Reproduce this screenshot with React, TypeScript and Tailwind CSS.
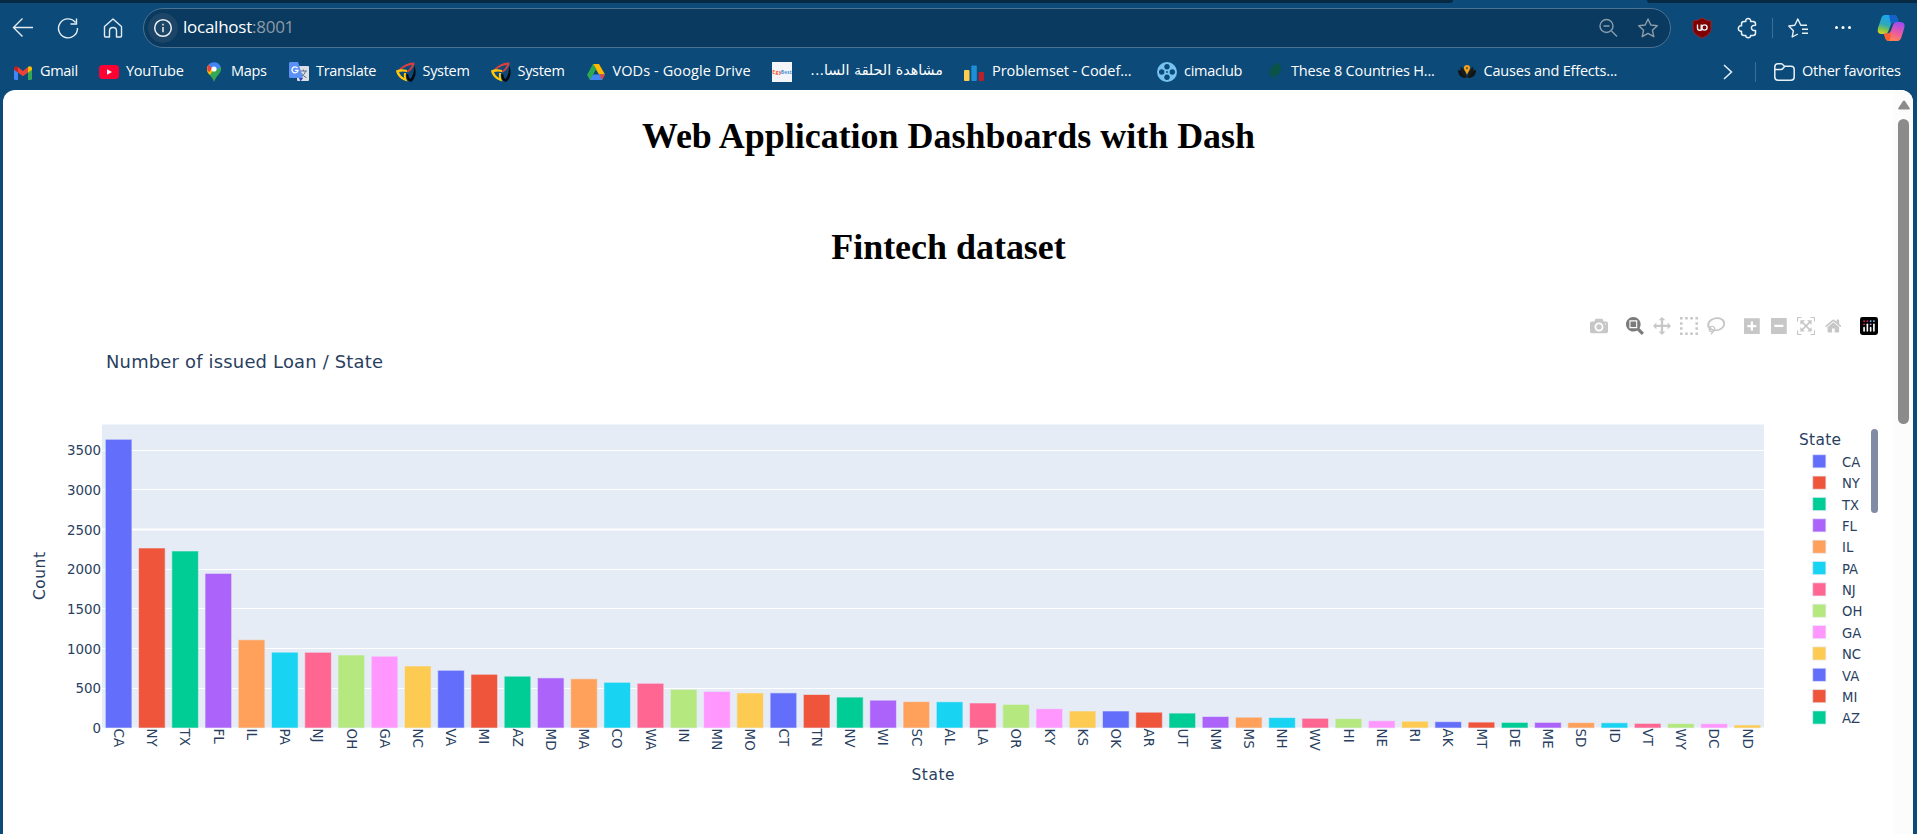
import type { ReactNode } from "react";

const PALETTE = ["#636efa", "#ef553b", "#00cc96", "#ab63fa", "#ffa15a", "#19d3f3", "#ff6692", "#b6e880", "#ff97ff", "#fecb52"];

// [state, bar top inside the plot's coordinate space]
const STATES: [string, number][] = [
  ["CA", 439.7], ["NY", 548.4], ["TX", 551.4], ["FL", 573.8], ["IL", 640.2], ["PA", 652.6], ["NJ", 652.7], ["OH", 655.4],
  ["GA", 656.6], ["NC", 666.4], ["VA", 670.7], ["MI", 674.7], ["AZ", 676.6], ["MD", 678.3], ["MA", 679.2], ["CO", 682.7],
  ["WA", 683.7], ["IN", 689.8], ["MN", 691.8], ["MO", 693.3], ["CT", 693.3], ["TN", 694.9], ["NV", 697.5], ["WI", 700.6],
  ["SC", 702], ["AL", 702.2], ["LA", 703.4], ["OR", 704.8], ["KY", 709.2], ["KS", 711.4], ["OK", 711.4], ["AR", 712.6],
  ["UT", 713.5], ["NM", 716.9], ["MS", 717.6], ["NH", 718], ["WV", 718.7], ["HI", 719], ["NE", 721.2], ["RI", 721.6],
  ["AK", 722.1], ["MT", 722.5], ["DE", 722.8], ["ME", 722.8], ["SD", 723], ["ID", 723.2], ["VT", 723.8], ["WY", 723.9],
  ["DC", 724.1], ["ND", 725.4],
];

const TICKS = [0, 500, 1000, 1500, 2000, 2500, 3000, 3500];
const ZERO = 728;
const LEFT = 102;
const STEP = 33.24;

function Chart() {
  return (
    <svg width="1891" height="480" viewBox="3 354 1891 480" className="block overflow-visible font-['DejaVu_Sans',sans-serif]" fill="#2a3f5f">
      <text x="106" y="368" fontSize="17.9" textLength="277">Number of issued Loan / State</text>
      <rect x="102" y="424.5" width="1662" height="303.5" fill="#e5ecf6" />
      {TICKS.map((t) => {
        const y = ZERO - t * 0.07935;
        const line = Math.round(y - 0.5) + 0.5;
        return (
          <g key={t}>
            <line x1="102" x2="1764" y1={line} y2={line} stroke="#fff" strokeWidth={t === 2500 || t === 0 ? 2 : 1} />
            <text x="101" y={y + 5} fontSize="13.4" textAnchor="end">{t}</text>
          </g>
        );
      })}
      {STATES.map(([name, top], i) => {
        const x = LEFT + STEP * i + STEP * 0.1;
        const cx = LEFT + STEP * (i + 0.5);
        return (
          <g key={name}>
            <rect x={x} y={top - 0.4} width={STEP * 0.8} height={ZERO - top + 0.4} fill={PALETTE[i % 10]} stroke="#e5ecf6" strokeOpacity="0.6" strokeWidth="1" />
            <text transform={`translate(${cx - 4.8} 728.6) rotate(90)`} fontSize="13.4">{name}</text>
          </g>
        );
      })}
      <text x="933" y="779.5" fontSize="15.4" textLength="43" textAnchor="middle">State</text>
      <text transform="translate(45 576) rotate(-90)" fontSize="15.4" textLength="48" textAnchor="middle">Count</text>
      <text x="1799" y="445" fontSize="15.4" textLength="42">State</text>
      {STATES.slice(0, 13).map(([name], i) => (
        <g key={name}>
          <rect x="1812.7" y={454.7 + i * 21.35} width="13.2" height="13.2" fill={PALETTE[i % 10]} stroke="#e5ecf6" strokeOpacity="0.7" />
          <text x="1842" y={467 + i * 21.35} fontSize="13.2">{name}</text>
        </g>
      ))}
      <rect x="1871" y="429" width="7" height="84" rx="3.5" fill="#808ba4" />
    </svg>
  );
}

const ICONS: Record<string, [number, string]> = {
  camera: [1000, "m500 450c-83 0-150-67-150-150 0-83 67-150 150-150 83 0 150 67 150 150 0 83-67 150-150 150z m400 150h-120c-16 0-34 13-39 29l-31 93c-6 15-23 28-40 28h-340c-16 0-34-13-39-28l-31-94c-6-15-23-28-40-28h-120c-55 0-100-45-100-100v-450c0-55 45-100 100-100h800c55 0 100 45 100 100v450c0 55-45 100-100 100z m-400-550c-138 0-250 112-250 250 0 138 112 250 250 250 138 0 250-112 250-250 0-138-112-250-250-250z m365 380c-19 0-35 16-35 35 0 19 16 35 35 35 19 0 35-16 35-35 0-19-16-35-35-35z"],
  zoom: [1000, "m1000-25l-250 251c40 63 63 138 63 218 0 224-182 406-407 406-224 0-406-182-406-406s183-406 407-406c80 0 155 22 218 62l250-250 125 125z m-812 250l0 438 437 0 0-438-437 0z m62 375l313 0 0-312-313 0 0 312z"],
  pan: [1000, "m1000 350l-187 188 0-125-250 0 0 250 125 0-188 187-187-187 125 0 0-250-250 0 0 125-188-188 186-187 0 125 252 0 0-250-125 0 187-188 188 188-125 0 0 250 250 0 0-126 187 188z"],
  select: [1000, "m0 850l0-143 143 0 0 143-143 0z m286 0l0-143 143 0 0 143-143 0z m285 0l0-143 143 0 0 143-143 0z m286 0l0-143 143 0 0 143-143 0z m-857-286l0-143 143 0 0 143-143 0z m857 0l0-143 143 0 0 143-143 0z m-857-285l0-143 143 0 0 143-143 0z m857 0l0-143 143 0 0 143-143 0z m-857-286l0-143 143 0 0 143-143 0z m286 0l0-143 143 0 0 143-143 0z m285 0l0-143 143 0 0 143-143 0z m286 0l0-143 143 0 0 143-143 0z"],
  lasso: [1031, "m1018 538c-36 207-290 336-568 286-277-48-473-256-436-463 10-57 36-108 76-151-13-66 11-137 68-183 34-28 75-41 114-42l-55-70 0 0c-2-1-3-2-4-3-10-14-8-34 5-45 14-11 34-8 45 4 1 1 2 3 2 5l0 0 113 140c16 11 31 24 45 40 4 3 6 7 8 11 48-3 100 0 151 9 278 48 473 255 436 462z m-624-379c-80 14-149 48-197 96 42 42 109 47 156 9 33-26 47-66 41-105z m-187-74c-19 16-33 37-39 60 50-32 109-55 174-68-42-25-95-24-135 8z m360 75c-34-7-69-9-102-8 8 62-16 128-68 170-73 59-175 54-244-5-9 20-16 40-20 61-28 159 121 317 333 354s407-60 434-217c28-159-121-318-333-355z"],
  plus: [875, "m1 787l0-875 875 0 0 875-875 0z m687-500l-187 0 0-187-125 0 0 187-188 0 0 125 188 0 0 187 125 0 0-187 187 0 0-125z"],
  minus: [875, "m0 788l0-876 875 0 0 876-875 0z m688-500l-500 0 0 125 500 0 0-125z"],
  autoscale: [1000, "m250 850l-187 0-63 0 0-62 0-188 63 0 0 188 187 0 0 62z m688 0l-188 0 0-62 188 0 0-188 62 0 0 188 0 62-62 0z m-875-938l0 188-63 0 0-188 0-62 63 0 187 0 0 62-187 0z m875 188l0-188-188 0 0-62 188 0 62 0 0 62 0 188-62 0z m-125 188l-1 0-93-94-156 156 156 156 92-93 2 0 0 250-250 0 0-2 93-92-156-156-156 156 94 92 0 2-250 0 0-250 0 0 93 93 157-156-157-156-93 94 0 0 0-250 250 0 0 0-94 93 156 157 156-157-93-93 0 0 250 0 0 250z"],
  home: [928.6, "m786 296v-267q0-15-11-26t-25-10h-214v214h-143v-214h-214q-15 0-25 10t-11 26v267q0 1 0 2t0 2l321 264 321-264q1-1 1-4z m124 39l-34-41q-5-5-12-6h-2q-7 0-12 3l-386 322-386-322q-7-4-13-4-7 2-12 7l-35 41q-4 5-3 13t6 12l401 334q18 15 42 15t43-15l136-114v109q0 8 5 13t13 5h107q8 0 13-5t5-13v-227l122-102q5-5 6-12t-4-13z"],
};

function ModeButton({ name, active }: { name: string; active?: boolean }) {
  const [w, d] = ICONS[name];
  return (
    <span className="flex h-[18px] w-[27px] items-center justify-center">
      <svg height="18" width={(18 * w) / 1000} viewBox={`0 0 ${w} 1000`} fill={active ? "#7b7b7b" : "#c7c7c7"}>
        <path transform="matrix(1 0 0 -1 0 850)" d={d} />
      </svg>
    </span>
  );
}

function ModeBar() {
  return (
    <div className="flex h-[18px] justify-end gap-[9px] pr-[11.5px]">
      <div className="flex"><ModeButton name="camera" /></div>
      <div className="flex">
        <ModeButton name="zoom" active /><ModeButton name="pan" /><ModeButton name="select" /><ModeButton name="lasso" />
      </div>
      <div className="flex">
        <ModeButton name="plus" /><ModeButton name="minus" /><ModeButton name="autoscale" /><ModeButton name="home" />
      </div>
      <div className="flex w-[27px] justify-center">
        <svg width="18" height="18" viewBox="0 0 132 132">
          <rect width="132" height="132" rx="18" fill="#000" />
          <g fill="#8cf"><circle cx="102" cy="30" r="7" /><circle cx="78" cy="30" r="7" /></g>
          <g fill="#e3286f"><circle cx="30" cy="30" r="7" /><circle cx="54" cy="30" r="7" /><circle cx="30" cy="54" r="7" /></g>
          <circle cx="78" cy="54" r="7" fill="#b9f" />
          <g fill="#fff">
            <rect x="24" y="72" width="12" height="36" rx="6" /><rect x="48" y="48" width="12" height="60" rx="6" />
            <rect x="72" y="72" width="12" height="36" rx="6" /><rect x="96" y="48" width="12" height="60" rx="6" />
          </g>
        </svg>
      </div>
    </div>
  );
}

const Swirl = () => (
  <svg width="20" height="20" viewBox="0 0 20 20">
    <path d="M3 7.500C7 3 13 0 18.500.500c.3 3-2 6.500-6.500 10l-1.500-1c3-2.500 5-5 5.500-6.800C12 3.300 8 5 5 8z" fill="#d9403d" />
    <path d="M18 4c2.800 5 2 12-3 16-3.500-1-5-4-4.500-8l2 .5c-.2 2 .5 3.500 2 4.500 2.800-3.500 3.800-8 3.500-13z" fill="#06090d" />
    <path d="M11 8C7 6.800 3 7 0 8.500c.5 5 5 9.500 11.500 11-1.500-2.500-2-4.500-1.500-8.500H8c-.3 2-.2 3.500.3 5C5.500 14.500 4 12.500 3 10c2.500-.8 5-.8 8 0z" fill="#ffc60a" />
  </svg>
);

const GmailIcon = () => (
  <svg width="20" height="20" viewBox="0 0 20 20">
    <path d="M1 6v10.500q0 1.500 1.500 1.500H5V8z" fill="#4285f4" />
    <path d="M19 6v10.500q0 1.500-1.500 1.500H15V8z" fill="#34a853" />
    <path d="M5 5l5 4 5-4v5.500L10 14.200 5 10.500z" fill="#ea4335" />
    <path d="M1 6.500C1 4 3.500 3.500 5 5v5.500L1 7.800z" fill="#c5221f" />
    <path d="M19 6.500C19 4 16.500 3.500 15 5v5.500l4-2.700z" fill="#fbbc04" />
  </svg>
);
const YouTubeIcon = () => (
  <svg width="20" height="20" viewBox="0 0 20 20">
    <rect y="3" width="20" height="14" rx="3.500" fill="#ff0033" /><path d="M8 7.200v5.600l5-2.800z" fill="#fff" />
  </svg>
);
const MapsIcon = () => (
  <svg width="20" height="20" viewBox="0 0 20 20">
    <path d="M10 20C9 15 3 12 3 7l14-2c1 7-5 8-7 15z" fill="#34a853" />
    <path d="M4 11C2 7 3 4 5 2.500l5 4.500-4 6z" fill="#fbbc04" />
    <path d="M3.300 8C3 5 4 3.500 5 2.300L9 6l-4 4z" fill="#ea4335" />
    <path d="M4.800 2.500C8-1 15-1 16.800 5L10 9z" fill="#4285f4" />
    <circle cx="10" cy="7" r="2.600" fill="#fff" />
  </svg>
);
const TranslateIcon = () => (
  <svg width="20" height="20" viewBox="0 0 20 20">
    <rect x="8" y="4" width="12" height="15" rx="1" fill="#dce0e5" />
    <path d="M11 9h7M14.500 7.500V9M16.500 9c-.5 3-3 5-5 6M12.500 11c1 2 3 4 5 4.500" stroke="#60758a" fill="none" />
    <path d="M10 16h4l-2.500 3.500z" fill="#3040c0" />
    <path d="M1 0h8l5 16H1.500Q0 16 0 14.500V1.500Q0 0 1 0z" fill="#5b91f5" />
    <path d="M8.500 6.200A3 3 0 1 0 9 8.300H6" stroke="#fff" fill="none" strokeWidth="1.300" />
  </svg>
);
const DriveIcon = () => (
  <svg width="20" height="20" viewBox="0 0 20 20">
    <path d="M7 2h6l6 10.500h-6z" fill="#ffba00" />
    <path d="M4.500 12.500H19L16 18H4z" fill="#4285f4" /><path d="M13.500 12.500H19L16 18z" fill="#ea4335" />
    <path d="M7 2l3.200 5L4 18l-3-5z" fill="#2da94f" />
  </svg>
);
const EgyIcon = () => (
  <svg width="20" height="20" viewBox="0 0 20 20">
    <rect width="20" height="20" fill="#f3f5f8" />
    <text x="0.300" y="11.500" fontSize="5" fontWeight="700" fill="#f0553b" textLength="9">Egy</text>
    <text x="9" y="11.500" fontSize="4.500" fontWeight="700" fill="#3a8fd4" textLength="10.500">Best</text>
  </svg>
);
const BarsIcon = () => (
  <svg width="20" height="20" viewBox="0 0 20 20">
    <rect y="8" width="5.500" height="11" rx="1" fill="#ffce4d" /><rect x="7.300" y="3.500" width="5.500" height="15.500" rx="1" fill="#1c8fd6" />
    <rect x="14.600" y="10" width="5.400" height="9" rx="1" fill="#b8202c" />
  </svg>
);
const ReelIcon = () => (
  <svg width="20" height="20" viewBox="0 0 20 20">
    <circle cx="10" cy="10" r="10" fill="#75c3ee" />
    <g fill="#0c4a79">
      <circle cx="10" cy="4.700" r="2.700" /><circle cx="10" cy="15.300" r="2.700" /><circle cx="4.700" cy="10" r="2.700" /><circle cx="15.300" cy="10" r="2.700" /><circle cx="10" cy="10" r="0.900" />
    </g>
  </svg>
);
const LeafIcon = () => (
  <svg width="20" height="20" viewBox="0 0 20 20">
    <path d="M16 1C9 2 5 6 5 12l2 3 3-1v5h1v-5c5-1 7-4 5-13z" fill="#0a5348" />
  </svg>
);
const CausesIcon = () => (
  <svg width="20" height="20" viewBox="0 0 20 20">
    <path d="M1 8c5 0 7 4 8 8-5 0-8-3-8-8zM19 8c-5 0-7 4-8 8 5 0 8-3 8-8z" fill="#101417" />
    <path d="M3.500 5c4 2 5.500 6 6.500 10.500C5.500 14 3 10 3.500 5zM16.500 5c-4 2-5.500 6-6.500 10.500 4.500-1.500 7-5.500 6.500-10.500z" fill="#1b1a16" />
    <path d="M10 3c2 0 3.100 1.200 3.100 3C13.100 8 11 10 10 12.500 9 10 6.900 8 6.900 6 6.900 4.200 8 3 10 3z" fill="#f5a21c" />
    <circle cx="10" cy="6.200" r="1.100" fill="#825312" />
  </svg>
);

const BOOKMARKS: { label: string; box: string; text: string; rtl?: boolean; icon: ReactNode }[] = [
  { label: "Gmail", box: "w-[86px]", text: "-ml-px", icon: <GmailIcon /> },
  { label: "YouTube", box: "w-[105px]", text: "-ml-px", icon: <YouTubeIcon /> },
  { label: "Maps", box: "w-[85px]", text: "-ml-px", icon: <MapsIcon /> },
  { label: "Translate", box: "w-[106.500px]", text: "-ml-px", icon: <TranslateIcon /> },
  { label: "System", box: "w-[95px]", text: "-ml-px", icon: <Swirl /> },
  { label: "System", box: "w-[95px]", text: "-ml-px", icon: <Swirl /> },
  { label: "VODs - Google Drive", box: "w-[186.500px]", text: "-ml-px tracking-[0.090px]", icon: <DriveIcon /> },
  { label: "مشاهدة الحلقة السا...", box: "w-[192px]", text: "ml-[11px] w-[132px] font-['DejaVu_Sans',sans-serif] text-[14.300px] tracking-normal", rtl: true, icon: <EgyIcon /> },
  { label: "Problemset - Codef...", box: "w-[193px]", text: "tracking-[-0.080px]", icon: <BarsIcon /> },
  { label: "cimaclub", box: "w-[107px]", text: "-ml-px", icon: <ReelIcon /> },
  { label: "These 8 Countries H...", box: "w-[192.500px]", text: "-ml-px tracking-[-0.160px]", icon: <LeafIcon /> },
  { label: "Causes and Effects...", box: "w-[180px]", text: "-ml-px tracking-[-0.200px]", icon: <CausesIcon /> },
];

function BrowserChrome() {
  return (
    <header className="text-white">
      <div className="flex h-[3px] justify-between">
        <div className="w-[1453px] rounded-br-[6px] bg-[#062944]" />
        <div className="w-[270px] rounded-bl-[6px] bg-[#062944]" />
      </div>
      <div className="flex h-[50px] items-center">
        <svg width="143" height="44" viewBox="0 5 143 44" fill="none" stroke="#e4ecf3" strokeWidth="1.400">
          <path d="M33 26.500H13.500M22.500 17.500l-9 9 9 9" />
          <path d="M75.500 21.500A9.500 9.500 0 1 0 77.500 27M76.500 17.500V23h-6" />
          <path d="M104.500 25.500l8.500-7.500 8.500 7.500V35q0 1-1 1h-4v-6q0-3.500-3.500-3.500T109.500 30v6h-4q-1 0-1-1z" strokeLinejoin="round" />
        </svg>
        <div className="flex h-[40px] w-[1528px] items-center rounded-full border border-[#4b7292] bg-[#0a3a5f] pl-[4px]">
          <span className="flex size-[30px] items-center justify-center rounded-full bg-[#1c4567]">
            <svg width="20" height="20" viewBox="0 0 20 20" fill="none" stroke="#e9eff4" strokeWidth="1.500">
              <circle cx="10" cy="10" r="8.300" /><path d="M10 9v5.200M10 5.800v1.700" />
            </svg>
          </span>
          <span className="-mt-[2px] ml-[5px] w-[1200px] font-['Open_Sans',sans-serif] text-[17px] tracking-[-0.250px] text-white">
            localhost<span className="text-[#8d9aa5]">:8001</span>
          </span>
          <svg className="ml-auto mr-[11px]" width="62" height="24" viewBox="1597 16 62 24" fill="none" stroke="#8a9dad" strokeWidth="1.400">
            <circle cx="1606.500" cy="26" r="6.500" /><path d="M1611.500 31l5.500 5.500M1603.500 26h6" />
            <path d="M1648 19l2.800 6 6.500.7-4.900 4.500 1.400 6.500-5.800-3.300-5.800 3.300 1.400-6.500-4.900-4.500 6.500-.7z" strokeLinejoin="round" />
          </svg>
        </div>
        <svg width="246" height="40" viewBox="1671 8 246 40" fill="none" stroke="#e9f1f7" strokeWidth="1.500" strokeLinejoin="round">
          <defs>
            <linearGradient id="cpL" x1="0.300" y1="0" x2="0" y2="1"><stop offset="0" stopColor="#1ba6ee" /><stop offset=".45" stopColor="#2fa8b8" /><stop offset=".75" stopColor="#8ec83f" /><stop offset="1" stopColor="#f8d51d" /></linearGradient>
            <linearGradient id="cpR" x1="0.600" y1="0" x2="0.300" y2="1"><stop offset="0" stopColor="#a04cf0" /><stop offset=".55" stopColor="#ee5c9b" /><stop offset="1" stopColor="#ff8a4a" /></linearGradient>
          </defs>
          <path d="M1702 18q4.500 3 9 3v8q0 5.500-9 9-9-3.500-9-9v-8q4.500 0 9-3z" fill="#800000" stroke="#8e2733" strokeWidth="1" />
          <path d="M1697.500 24.500v3.500q0 2.200 2.200 2.200h1.500v-5.700" strokeWidth="1.400" /><circle cx="1704.500" cy="27.500" r="2.600" strokeWidth="1.400" />
          <path d="M1741.500 24q0-2.500 2.500-2.500h1.800c-.8-4 5.600-4 4.800 0h2.400q2.500 0 2.500 2.500v1.200c-5.500-.5-5.500 5.800 0 5.300v2.500q0 2.500-2.500 2.500h-2.400c.8 2.900-5.600 2.900-4.800 0H1744q-2.500 0-2.500-2.500v-1.800c-4.200.8-4.200-6.200 0-5.400z" />
          <path d="M1772.500 18v20" stroke="#3b6f98" strokeWidth="1" />
          <path d="M1807 25.200h-6.200l-3-6.200-3 6.200-6 .8 4.600 4.700-1.200 6.300 5.600-3M1802 29.200h6M1802 33.200h6" strokeWidth="1.400" />
          <g fill="#fff" stroke="none"><circle cx="1836.500" cy="27.500" r="1.500" /><circle cx="1843" cy="27.500" r="1.500" /><circle cx="1849.500" cy="27.500" r="1.500" /></g>
          <g stroke="none">
            <path d="M1885 15h8.500q3 0 4 3.500l1.200 4h-4.200q-3 0-4 3l-2.500 6.500q-.8 2-3.500 2h-2.500q-5.500 0-4-6l3-9q1-4 4-4z" fill="url(#cpL)" />
            <path d="M1889 15h4.500q3 0 4 3.500l1.200 4h-4.200q-2.500 0-3.500 2z" fill="#1460c8" />
            <path d="M1897.500 41h-8.500q-3 0-4-3.500l-1-4h3.500q2.500 0 3.500-3l2.200-6q.9-2.500 3.600-2.500h3.500q5.500 0 4 6l-2.800 9q-1.200 4-4 4z" fill="url(#cpR)" />
            <path d="M1889 41q-3 0-4-3.500l-1-4h3.500q2 0 3-1.500l.5 3q-.5 4.500-2 6z" fill="#f9622f" />
          </g>
        </svg>
      </div>
      <div className="flex h-[37px] items-center pl-[13px] font-['Open_Sans',sans-serif] text-[14.500px] tracking-[-0.300px]">
        {BOOKMARKS.map((b, i) => (
          <div key={i} className={`flex shrink-0 items-center gap-[8px] whitespace-nowrap ${b.box}`}>
            {b.icon}
            <span dir={b.rtl ? "rtl" : "ltr"} className={`-mt-[2px] ${b.text}`}>{b.label}</span>
          </div>
        ))}
        <svg className="mr-[6px] ml-auto shrink-0" width="76" height="24" viewBox="1720 59 76 24" fill="none" stroke="#e9f1f7" strokeWidth="1.500">
          <path d="M1724 64l7.500 7-7.500 7" /><path d="M1755.500 61v20" stroke="#3b6f98" strokeWidth="1" />
          <path d="M1774.800 75.500V66q0-3.200 3.200-3.200h3q1.500 0 2.500 1.500l1 1h6.500q3.200 0 3.200 3.200v7.500q0 3.200-3.200 3.200h-13q-3.200 0-3.200-3.200zM1774.800 68.500h6q1.500 0 2.500-1.500l1.500-1.700" />
        </svg>
        <span className="-mt-[2px] mr-[13px] w-[102px] shrink-0 tracking-[-0.220px] whitespace-nowrap">Other favorites</span>
      </div>
    </header>
  );
}

export default function App() {
  return (
    <div className="flex h-[834px] w-[1917px] flex-col overflow-hidden bg-[#0c4a79]">
      <BrowserChrome />
      <div className="ml-[3px] flex h-[744px] w-[1910px] overflow-hidden rounded-t-[12px] bg-white">
        <main className="flex w-[1891px] flex-col font-['Liberation_Serif',serif] text-black">
          <h1 className="mt-[25px] h-[42px] text-center text-[35.950px] leading-[42px] font-bold">Web Application Dashboards with Dash</h1>
          <h1 className="mt-[69px] h-[42px] text-center text-[35.950px] leading-[42px] font-bold">Fintech dataset</h1>
          <div className="mt-[49px]"><ModeBar /></div>
          <div className="mt-[19px]"><Chart /></div>
        </main>
        <div className="flex w-[19px] flex-col items-center bg-[#fcfcfc]">
          <svg className="mt-[10px]" width="12" height="10" viewBox="0 0 12 10"><path d="M6 .5q.6 0 1 .6l4.600 7q.6 1.400-.8 1.400H1.200Q-.2 9.500.4 8.100L5 1.100q.4-.6 1-.6z" fill="#8b8b8b" /></svg>
          <div className="mt-[9px] h-[305px] w-[11px] rounded-full bg-[#8b8b8b]" />
        </div>
      </div>
    </div>
  );
}
